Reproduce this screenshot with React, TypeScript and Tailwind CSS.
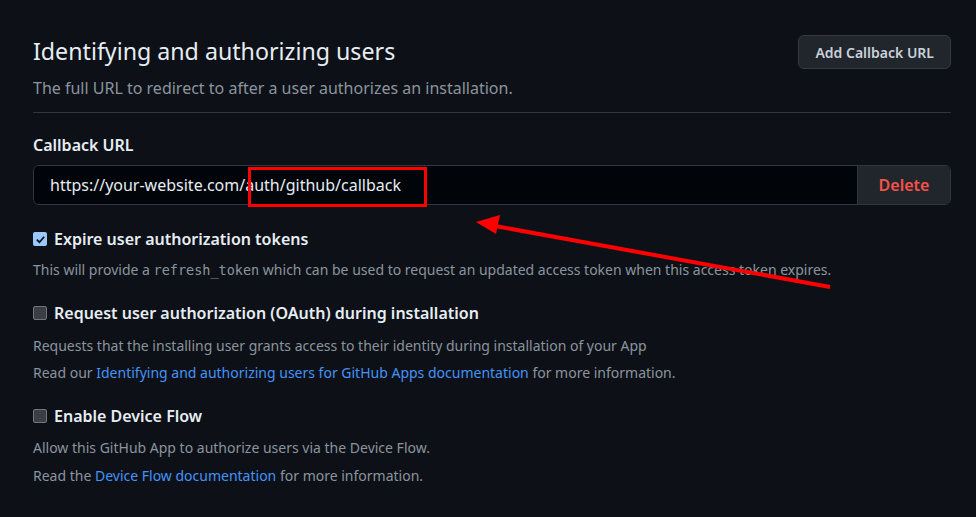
export default function App() {
  return (
    <div
      className="relative h-[517px] w-[976px] overflow-hidden bg-[#0d1117] text-[#e6edf3]"
      style={{ fontFamily: '"Noto Sans", "Open Sans", sans-serif' }}
    >
      <div className="px-[33px] pt-[35px] pr-[25px]">
        <div className="flex items-start justify-between border-b border-[#30363d] pb-[12px]">
          <div>
            <h2 className="text-[23.2px] font-normal leading-[32px]">Identifying and authorizing users</h2>
            <p className="mt-[9px] text-[16px] leading-[24px] text-[#8b949e]">
              The full URL to redirect to after a user authorizes an installation.
            </p>
          </div>
          <button className="h-[34px] rounded-[6px] border border-[#363b42] bg-[#21262d] px-4 text-[14px] font-semibold text-[#c9d1d9]">
            Add Callback URL
          </button>
        </div>

        <div className="mt-[20px] text-[16px] font-semibold leading-[24px]">Callback URL</div>
        <div className="mt-[8px] flex h-[40px] overflow-hidden rounded-[6px] border border-[#30363d]">
          <div className="flex flex-1 items-center bg-[#010409] pl-[16px] text-[16px]">
            https://your-website.com/auth/github/callback
          </div>
          <button className="w-[93px] border-l border-[#30363d] bg-[#21262d] text-[16px] font-semibold text-[#f85149]">
            Delete
          </button>
        </div>

        <div className="mt-[22px] flex items-center gap-[7px]">
          <span className="flex h-[14px] w-[14px] items-center justify-center rounded-[2px] bg-[#99c8ff]">
            <svg viewBox="0 0 12 12" className="h-[11px] w-[11px]">
              <path d="M2 6.2 L4.8 9 L10 3" fill="none" stroke="#0d1117" strokeWidth="2" />
            </svg>
          </span>
          <span className="text-[16px] font-semibold leading-[24px]">Expire user authorization tokens</span>
        </div>
        <p className="mt-[9px] text-[14px] leading-[20px] text-[#8b949e]">
          This will provide a{" "}
          <code className="text-[13.5px]" style={{ fontFamily: '"DejaVu Sans Mono", "Liberation Mono", monospace' }}>
            refresh_token
          </code>{" "}
          which can be used to request an updated access token when this access token expires.
        </p>

        <div className="mt-[21px] flex items-center gap-[7px]">
          <span className="h-[14px] w-[14px] rounded-[2px] border border-[#6e7681] bg-[#3b3f45]" />
          <span className="text-[16px] font-semibold leading-[24px]">
            Request user authorization (OAuth) during installation
          </span>
        </div>
        <p className="mt-[11px] text-[14px] leading-[20px] text-[#8b949e]">
          Requests that the installing user grants access to their identity during installation of your App
        </p>
        <p className="mt-[7px] text-[14px] leading-[20px] text-[#8b949e]">
          Read our{" "}
          <a className="text-[#4493f8]">Identifying and authorizing users for GitHub Apps documentation</a> for more
          information.
        </p>

        <div className="mt-[21px] flex items-center gap-[7px]">
          <span className="h-[14px] w-[14px] rounded-[2px] border border-[#6e7681] bg-[#3b3f45]" />
          <span className="text-[16px] font-semibold leading-[24px]">Enable Device Flow</span>
        </div>
        <p className="mt-[10px] text-[14px] leading-[20px] text-[#8b949e]">
          Allow this GitHub App to authorize users via the Device Flow.
        </p>
        <p className="mt-[8px] text-[14px] leading-[20px] text-[#8b949e]">
          Read the <a className="text-[#4493f8]">Device Flow documentation</a> for more information.
        </p>
      </div>

      <div className="absolute left-[248px] top-[167px] h-[40px] w-[179px] border-[3px] border-[#ff0000]" />
      <svg className="absolute left-0 top-0" width="976" height="517">
        <line x1="830" y1="287" x2="495" y2="226" stroke="#ff0000" strokeWidth="4" />
        <polygon points="476,222 500,215 496,234" fill="#ff0000" />
      </svg>
    </div>
  );
}
